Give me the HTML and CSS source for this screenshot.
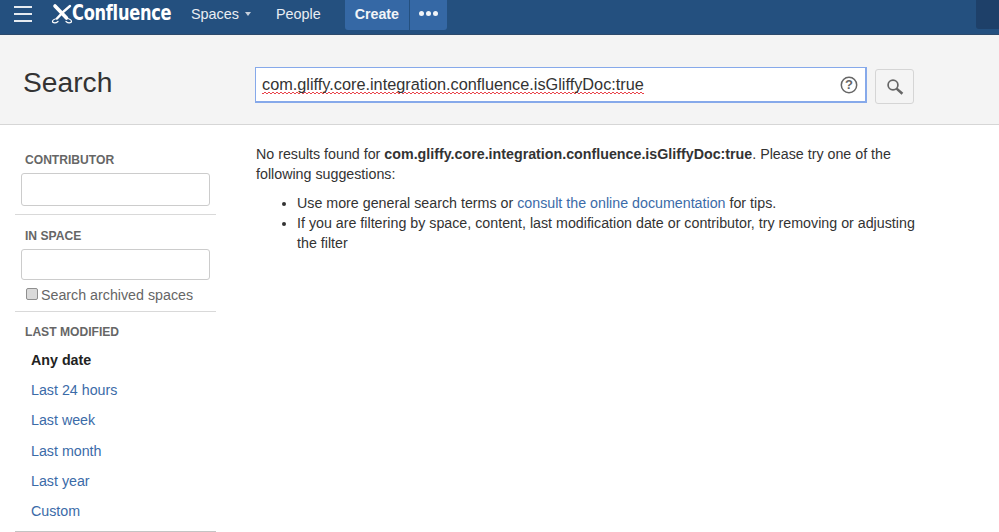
FILE: index.html
```html
<!DOCTYPE html>
<html lang="en">
<head>
<meta charset="utf-8">
<title>Search - Confluence</title>
<link rel="stylesheet" href="styles.css">
</head>
<body>
<header class="topbar">
  <button class="burger" aria-label="Menu"><span></span><span></span><span></span></button>
  <a class="logo">
    <svg class="logo-mark" width="22" height="22" viewBox="0 0 22 22" fill="none" stroke="#fff" stroke-linecap="round">
      <path d="M4 3 L15.5 15" stroke-width="3.6"/>
      <path d="M19 3 Q12 8.5 6 15.5" stroke-width="2.4"/>
      <path d="M6 15.5 Q1 16.5 1.5 19 Q4 21 7 18.5" stroke-width="1.2"/>
      <path d="M15.5 15 Q21 16.5 20.5 19 Q18 21 15 18.5" stroke-width="1.2"/>
    </svg>
    <span class="logo-text">Confluence</span>
  </a>
  <nav class="nav">
    <a class="nav-link spaces">Spaces<i class="caret"></i></a>
    <a class="nav-link people">People</a>
  </nav>
  <div class="actions">
    <a class="create">Create</a>
    <a class="more" aria-label="More"><i></i><i></i><i></i></a>
  </div>
  <div class="corner"></div>
</header>

<section class="searchbar">
  <h1>Search</h1>
  <div class="query">
    <span class="query-text">com.gliffy.core.integration.confluence.isGliffyDoc:true</span>
    <svg class="help" width="18" height="18" viewBox="0 0 18 18" fill="none">
      <circle cx="9" cy="9" r="7.7" stroke="#666" stroke-width="1.5"/>
      <text x="9" y="13" text-anchor="middle" class="help-q">?</text>
    </svg>
  </div>
  <button class="go" aria-label="Search">
    <svg width="18" height="18" viewBox="0 0 18 18" fill="none" stroke="#666">
      <circle cx="7" cy="7" r="4.9" stroke-width="1.7"/>
      <path d="M10.6 10.6 L16.4 15.8" stroke-width="2.6"/>
    </svg>
  </button>
</section>

<div class="content">
  <aside class="sidebar">
    <div class="facet first">
      <h2>CONTRIBUTOR</h2>
      <div class="field tall"></div>
    </div>
    <div class="facet second">
      <h2>IN SPACE</h2>
      <div class="field"></div>
      <label class="archived"><i class="check"></i>Search archived spaces</label>
    </div>
    <div class="facet last">
      <h2>LAST MODIFIED</h2>
      <ul class="dates">
        <li class="active">Any date</li>
        <li>Last 24 hours</li>
        <li>Last week</li>
        <li>Last month</li>
        <li>Last year</li>
        <li>Custom</li>
      </ul>
    </div>
  </aside>
  <main class="results">
    <p>No results found for <b>com.gliffy.core.integration.confluence.isGliffyDoc:true</b>. Please try one of the following suggestions:</p>
    <ul>
      <li>Use more general search terms or <a>consult the online documentation</a> for tips.</li>
      <li>If you are filtering by space, content, last modification date or contributor, try removing or adjusting the filter</li>
    </ul>
  </main>
</div>
</body>
</html>
```
FILE: styles.css
```css
* { box-sizing: border-box; }
html, body { margin: 0; height: 532px; overflow: hidden; }
body { background: #fff; color: #333; font: 14.25px/20px "Liberation Sans", Arial, sans-serif; }

.topbar {
  height: 35px;
  background: #24507f;
  border-bottom: 1px solid #2c4a6c;
  display: flex;
  align-items: flex-start;
  color: #fff;
}
.burger {
  width: 18px; height: 16px;
  margin: 6px 0 0 14px;
  padding: 0; border: 0; background: none;
  display: flex; flex-direction: column; justify-content: space-between;
}
.burger span { display: block; height: 2px; background: #e6ebf1; }
.logo { display: flex; align-items: center; margin-left: 19px; height: 27px; }
.logo-mark { margin-top: 1px; flex: none; }
.logo-text {
  font: bold 20.5px/27px "DejaVu Sans Condensed", "DejaVu Sans", sans-serif;
  margin-left: -1px;
  width: 100px;
  white-space: nowrap;
  letter-spacing: -0.3px;
  transform: scaleX(.88);
  transform-origin: left center;
}
.nav { display: flex; margin-left: 19px; height: 27px; align-items: center; }
.nav-link { color: #e9edf3; font-size: 14.4px; }
.spaces { display: flex; align-items: center; }
.caret {
  width: 0; height: 0;
  margin-left: 6px;
  border: 3.5px solid transparent;
  border-top: 4px solid #c6d0dc;
  border-bottom: 0;
}
.people { margin-left: 25px; }
.actions { display: flex; margin-left: 24px; height: 30px; gap: 1px; }
.create, .more {
  background: #3568a5;
  display: flex; align-items: center; justify-content: center;
  height: 30px;
  padding-bottom: 3px;
}
.create { width: 64px; font-weight: bold; border-radius: 0 0 0 3px; color: #f1f4f8; }
.more { width: 37px; gap: 2px; border-radius: 0 0 3px 0; }
.more i { width: 5px; height: 5px; border-radius: 50%; background: #f1f4f8; }
.corner {
  margin-left: auto;
  width: 23px; height: 29px;
  background: #1e4069;
  border-radius: 0 0 0 3px;
}

.searchbar {
  height: 90px;
  background: #f4f4f4;
  border-bottom: 1px solid #d6d6d6;
  display: flex;
  align-items: flex-start;
}
h1 {
  margin: 28px 0 0 23px;
  width: 232px;
  font: 400 28.2px/38px "Liberation Sans", Arial, sans-serif;
  color: #333;
}
.query {
  width: 612px; height: 36px;
  margin-top: 32px;
  background: #fff;
  border: 2px solid #86a9ea;
  border-width: 1px 2px 2px 1px;
  display: flex; align-items: center; justify-content: space-between;
  padding: 0 7px 2px 6px;
}
.query-text {
  font-size: 16.3px;
  color: #333;
  background-image:
    linear-gradient(135deg, transparent 35%, #e8434a 35% 65%, transparent 65%),
    linear-gradient(45deg, transparent 35%, #e8434a 35% 65%, transparent 65%);
  background-size: 4px 2px, 4px 2px;
  background-position: 0 100%, 2px 100%;
  background-repeat: repeat-x;
}
.help { margin-top: 2px; }
.help-q { font: bold 13px "Liberation Sans", sans-serif; fill: #666; }
.go {
  width: 39px; height: 35px;
  margin: 34px 0 0 8px;
  padding: 0;
  border: 1px solid #d5d5d5; border-radius: 3px;
  background: #f4f4f4;
  display: flex; align-items: center; justify-content: center;
}

.content { display: flex; }
.sidebar { width: 201px; margin-left: 15px; flex: none; }
.facet { border-bottom: 1px solid #d9d9d9; padding: 14px 6px 7px; }
.facet.first { padding: 25px 6px 8px; }
.facet.second { padding: 11px 6px 4px; }
.facet.last { border-bottom-color: #c4c4c4; padding-bottom: 5px; padding-top: 10px; }
h2 {
  margin: 0 0 3px 4px;
  font: bold 12.1px/20px "Liberation Sans", Arial, sans-serif;
  color: #666;
}
.facet.first h2 { margin-bottom: 3px; }
.field {
  width: 189px; height: 31px;
  background: #fff;
  border: 1px solid #ccc; border-radius: 3px;
}
.field.tall { height: 33px; }
.archived { display: flex; align-items: center; color: #666; margin-top: 3px; height: 24px; }
.check {
  width: 12px; height: 12px;
  margin: -3px 3px 0 5px;
  background: #dadada;
  border: 1px solid #8f8f8f; border-radius: 2px;
}
.dates { list-style: none; margin: 3px 0 0; padding: 0 0 0 10px; }
.dates li { height: 30.2px; line-height: 30px; color: #3b6ba8; }
.dates .active { font-weight: bold; color: #222; }

.results { margin-left: 40px; width: 662px; padding-top: 19px; }
.results p { margin: 0; }
.results ul { margin: 9px 0 0; padding: 0 0 0 41px; }
.results a { color: #3b6ba8; }
```
